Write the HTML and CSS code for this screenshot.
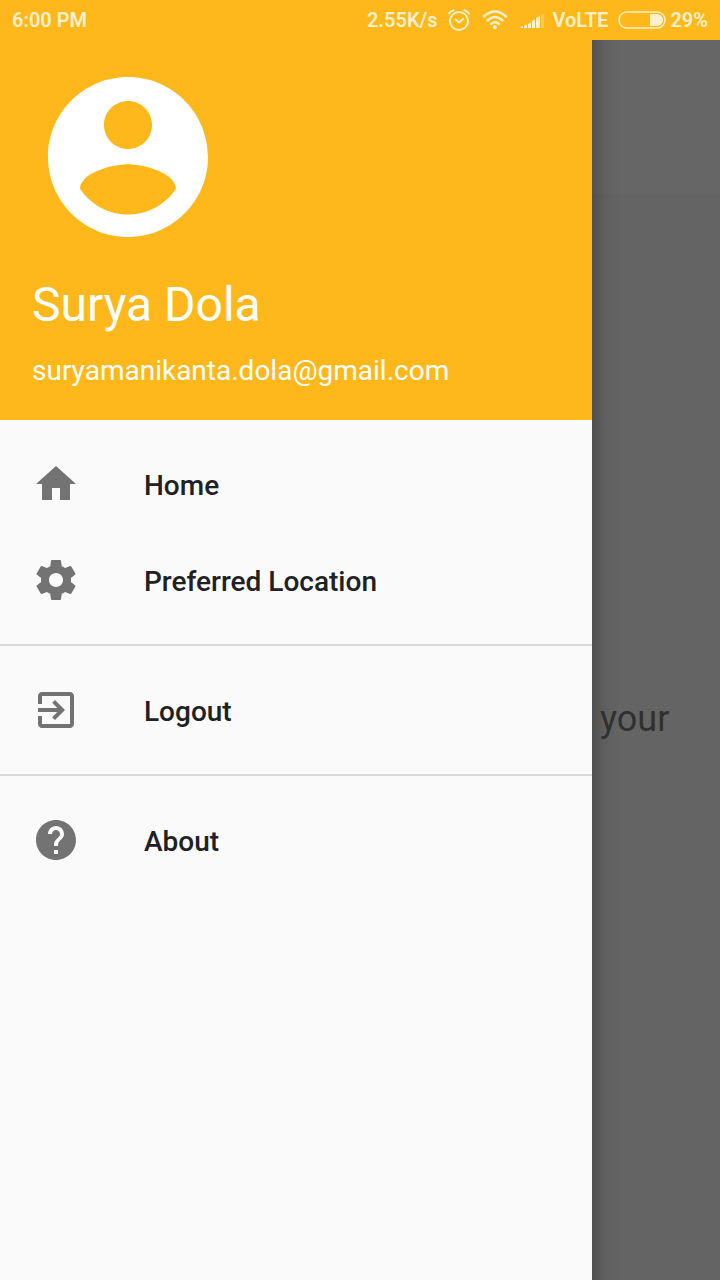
FILE: index.html
```html
<!DOCTYPE html>
<html lang="en">
<head>
  <meta charset="utf-8">
  <meta name="viewport" content="width=device-width, initial-scale=1">
  <title>Navigation drawer</title>
  <link rel="stylesheet" href="styles.css">
</head>
<body>
  <header class="status">
    <time class="clock">6:00 PM</time>
    <span class="speed">2.55K/s</span>
    <svg class="alarm" width="24" height="24" viewBox="0 0 24 24" fill="none" stroke="currentColor" stroke-width="2" stroke-linecap="round" aria-hidden="true">
      <circle cx="12" cy="13" r="9"/>
      <path d="M8.500 11.500l3.500 3 4-3.500M2 5.500Q3.500 3 6.500 2.200M22 5.500Q20.500 3 17.500 2.200"/>
    </svg>
    <svg class="wifi" width="26" height="20" viewBox="0 0 26 20" fill="none" stroke="currentColor" stroke-width="2.400" stroke-linecap="round" aria-hidden="true">
      <path d="M2 6.500Q13-3.500 24 6.500M5.500 10.500Q13 3.500 20.500 10.500M9 14Q13 10.500 17 14"/>
      <circle cx="13" cy="17.300" r="2" fill="currentColor" stroke="none"/>
    </svg>
    <svg class="signal" width="25" height="18" viewBox="0 0 25 18" fill="currentColor" aria-hidden="true">
      <path d="M0 17l3-2v2zM4 15l3-1.500V17H4zM8 13l3-1.500V17H8zM12 10l3-1.500V17h-3zM16 7l4-2v12h-4z"/>
      <path d="M21 4l3-1.500V17h-3z" opacity=".3"/>
    </svg>
    <span class="network">VoLTE</span>
    <svg class="battery" width="48" height="18" viewBox="0 0 48 18" aria-hidden="true">
      <rect x="1" y="1" width="46" height="16" rx="8" fill="none" stroke="currentColor" stroke-width="1.500"/>
      <path d="M32 3h7a6 6 0 0 1 0 12h-7z" fill="currentColor"/>
    </svg>
    <span class="percent">29%</span>
  </header>

  <div class="screen">
    <aside class="drawer">
      <section class="profile">
        <svg class="avatar" viewBox="0 0 24 24" fill="currentColor" aria-hidden="true">
          <path d="M12 2C6.480 2 2 6.480 2 12s4.480 10 10 10 10-4.480 10-10S17.520 2 12 2zm0 3c1.660 0 3 1.340 3 3s-1.340 3-3 3-3-1.340-3-3 1.340-3 3-3zm0 14.200c-2.500 0-4.710-1.280-6-3.220.030-1.990 4-3.080 6-3.080 1.990 0 5.970 1.090 6 3.080-1.290 1.940-3.500 3.220-6 3.220z"/>
        </svg>
        <h1 class="name">Surya Dola</h1>
        <p class="email">suryamanikanta.dola@gmail.com</p>
      </section>
      <nav class="menu">
        <div class="group">
          <button class="item" type="button">
            <svg class="icon" viewBox="0 0 24 24" aria-hidden="true"><path d="M10 20v-6h4v6h5v-8h3L12 3 2 12h3v8z"/></svg>
            <span class="label">Home</span>
          </button>
          <button class="item" type="button">
            <svg class="icon" viewBox="0 0 24 24" aria-hidden="true"><path d="M19.430 12.980c.040-.320.070-.640.070-.980s-.030-.660-.070-.980l2.110-1.650c.190-.150.240-.420.120-.640l-2-3.460c-.120-.220-.390-.300-.610-.220l-2.490 1c-.520-.400-1.080-.730-1.690-.980l-.380-2.650C14.460 2.180 14.250 2 14 2h-4c-.250 0-.460.180-.490.420l-.380 2.650c-.610.250-1.170.590-1.690.980l-2.490-1c-.230-.090-.490 0-.610.220l-2 3.460c-.130.220-.070.490.120.640l2.110 1.650c-.040.320-.070.650-.070.980s.030.660.070.980l-2.110 1.650c-.190.150-.240.420-.120.640l2 3.460c.120.220.390.300.610.220l2.490-1c.520.400 1.080.730 1.690.980l.380 2.650c.030.240.240.420.490.420h4c.250 0 .460-.180.490-.420l.380-2.650c.610-.250 1.170-.590 1.690-.980l2.490 1c.230.090.490 0 .610-.220l2-3.460c.120-.220.070-.490-.120-.640l-2.110-1.650zM12 15.500c-1.930 0-3.500-1.570-3.500-3.500s1.570-3.500 3.500-3.500 3.500 1.570 3.500 3.500-1.570 3.500-3.500 3.500z"/></svg>
            <span class="label">Preferred Location</span>
          </button>
        </div>
        <div class="group">
          <button class="item" type="button">
            <svg class="icon" viewBox="0 0 24 24" aria-hidden="true"><path d="M10.090 15.590L11.500 17l5-5-5-5-1.410 1.410L12.670 11H3v2h9.670l-2.580 2.590zM19 3H5c-1.110 0-2 .900-2 2v4h2V5h14v14H5v-4H3v4c0 1.100.890 2 2 2h14c1.100 0 2-.900 2-2V5c0-1.100-.900-2-2-2z"/></svg>
            <span class="label">Logout</span>
          </button>
        </div>
        <div class="group">
          <button class="item" type="button">
            <svg class="icon" viewBox="0 0 24 24" aria-hidden="true"><path d="M12 2C6.480 2 2 6.480 2 12s4.480 10 10 10 10-4.480 10-10S17.520 2 12 2zm1 17h-2v-2h2v2zm2.070-7.750l-.900.920C13.450 12.900 13 13.500 13 15h-2v-.500c0-1.100.450-2.100 1.170-2.830l1.240-1.260c.370-.360.590-.860.590-1.410 0-1.100-.900-2-2-2s-2 .900-2 2H8c0-2.210 1.790-4 4-4s4 1.790 4 4c0 .880-.360 1.680-.930 2.250z"/></svg>
            <span class="label">About</span>
          </button>
        </div>
      </nav>
    </aside>
    <main class="page">
      <div class="toolbar"></div>
      <div class="content"><p class="message">your</p></div>
    </main>
  </div>
</body>
</html>
```
FILE: styles.css
```css
* {
  box-sizing: border-box;
}

body {
  margin: 0;
  min-height: 100vh;
  display: flex;
  flex-direction: column;
  font-family: Roboto, "Liberation Sans", sans-serif;
  background: #646464;
}

.status {
  display: flex;
  align-items: center;
  height: 40px;
  padding: 0 12px;
  background: #ffb81c;
  color: #fff0cc;
  font-size: 20px;
  font-weight: 600;
}

.clock {
  margin-right: auto;
}

.alarm {
  margin-left: 10px;
}

.wifi {
  margin-left: 11px;
}

.signal {
  margin-left: 12px;
}

.network {
  margin-left: 7px;
}

.battery {
  margin: 0 4px 0 10px;
}

.screen {
  flex: 1;
  display: flex;
}

.drawer {
  flex: none;
  width: calc(100% - 128px);
  background: #fafafa;
}

.profile {
  padding: 21px 32px 33px;
  background: #ffb81c;
  color: #fff;
}

.avatar {
  display: block;
  width: 192px;
  height: 192px;
}

.name {
  margin: 24px 0 0;
  font-size: 48px;
  font-weight: 400;
  line-height: 56px;
}

.email {
  margin: 22px 0 0;
  font-size: 28px;
  line-height: 32px;
}

.group {
  padding: 16px 0;
}

.group + .group {
  border-top: 2px solid #dadada;
}

.item {
  display: flex;
  align-items: center;
  gap: 64px;
  width: 100%;
  height: 96px;
  padding: 0 32px;
  border: 0;
  background: none;
  color: #212121;
  font: 500 28px Roboto, "Liberation Sans", sans-serif;
  text-align: left;
}

.icon {
  flex: none;
  width: 48px;
  height: 48px;
  fill: #737373;
}

.label {
  padding-top: 2px;
}

.page {
  flex: 1;
  display: flex;
  flex-direction: column;
  background: linear-gradient(to right, rgba(0, 0, 0, 0.2), rgba(0, 0, 0, 0.06) 12px, transparent 28px);
}

.toolbar {
  height: 154px;
  background: rgba(255, 255, 255, 0.014);
}

.content {
  flex: 1;
  padding: 503px 8px 0;
}

.message {
  margin: 0;
  color: #303030;
  font-size: 36px;
  line-height: 44px;
}
```
